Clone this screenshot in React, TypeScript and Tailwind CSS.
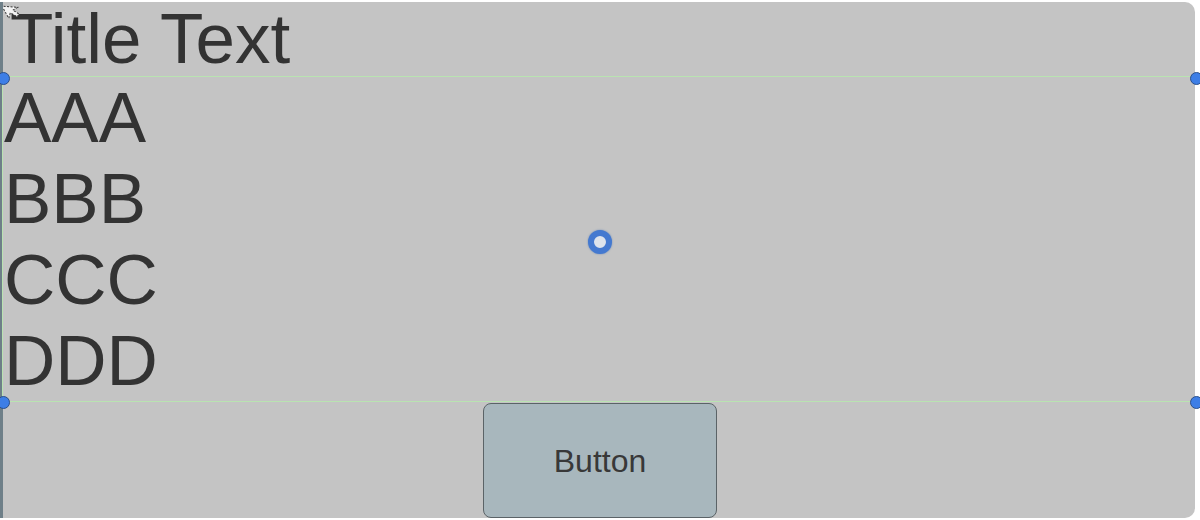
import React from "react";

const lines = ["AAA", "BBB", "CCC", "DDD"];

function Handle({ className }: { className: string }) {
  return (
    <div
      className={`absolute w-[13px] h-[13px] rounded-full bg-[#3d7ee6] border border-[#2a4f8a] ${className}`}
    />
  );
}

export default function App() {
  return (
    <div
      className="relative w-[1200px] h-[520px] bg-white overflow-hidden"
      style={{ fontFamily: '"Liberation Sans", Arial, sans-serif' }}
    >
      <div className="mt-[2px] w-[1195px] h-[516px] bg-[#c4c4c4] rounded-r-[10px] border-l-[3px] border-[#6e7f88] flex flex-col">
        {/* title */}
        <div className="h-[76px] pl-[7px] text-[71px] leading-[74px] text-[#333333]">
          Title Text
        </div>

        {/* list */}
        <div className="border-y border-[#b9e3b1] -ml-[1px] border-l border-l-[#b9e3b1] h-[326px] pl-[1px]">
          {lines.map((t) => (
            <div key={t} className="h-[81px] text-[71px] leading-[81px] text-[#333333]">
              {t}
            </div>
          ))}
        </div>

        {/* button row */}
        <div className="flex-1 flex justify-center -ml-[3px] w-[1200px]">
          <button className="w-[234px] h-[115px] mt-[1px] bg-[#a8b7bd] border border-[#5b6367] rounded-[8px] text-[32px] text-[#383838]">
            Button
          </button>
        </div>
      </div>

      {/* editor overlays */}
      <Handle className="left-[-3px] top-[72px]" />
      <Handle className="left-[1190px] top-[72px]" />
      <Handle className="left-[-3px] top-[396px]" />
      <Handle className="left-[1190px] top-[396px]" />
      <div className="absolute left-[588px] top-[230px] w-[24px] h-[24px] rounded-full border-[6px] border-[#4479d0] bg-[#dde3ec] shadow-[0_0_2px_#6b8ab8]" />

      {/* cursor */}
      <svg className="absolute left-[3px] top-0" width="22" height="22" viewBox="0 0 22 22">
        <path
          d="M2 2 L2 16 L6 12 L10 19 L13 17.5 L9.5 11 L15 11 Z"
          transform="rotate(-30 8 10)"
          fill="#f4f4f4"
          stroke="#333"
          strokeWidth="1"
          strokeDasharray="2 1.5"
        />
      </svg>
    </div>
  );
}
